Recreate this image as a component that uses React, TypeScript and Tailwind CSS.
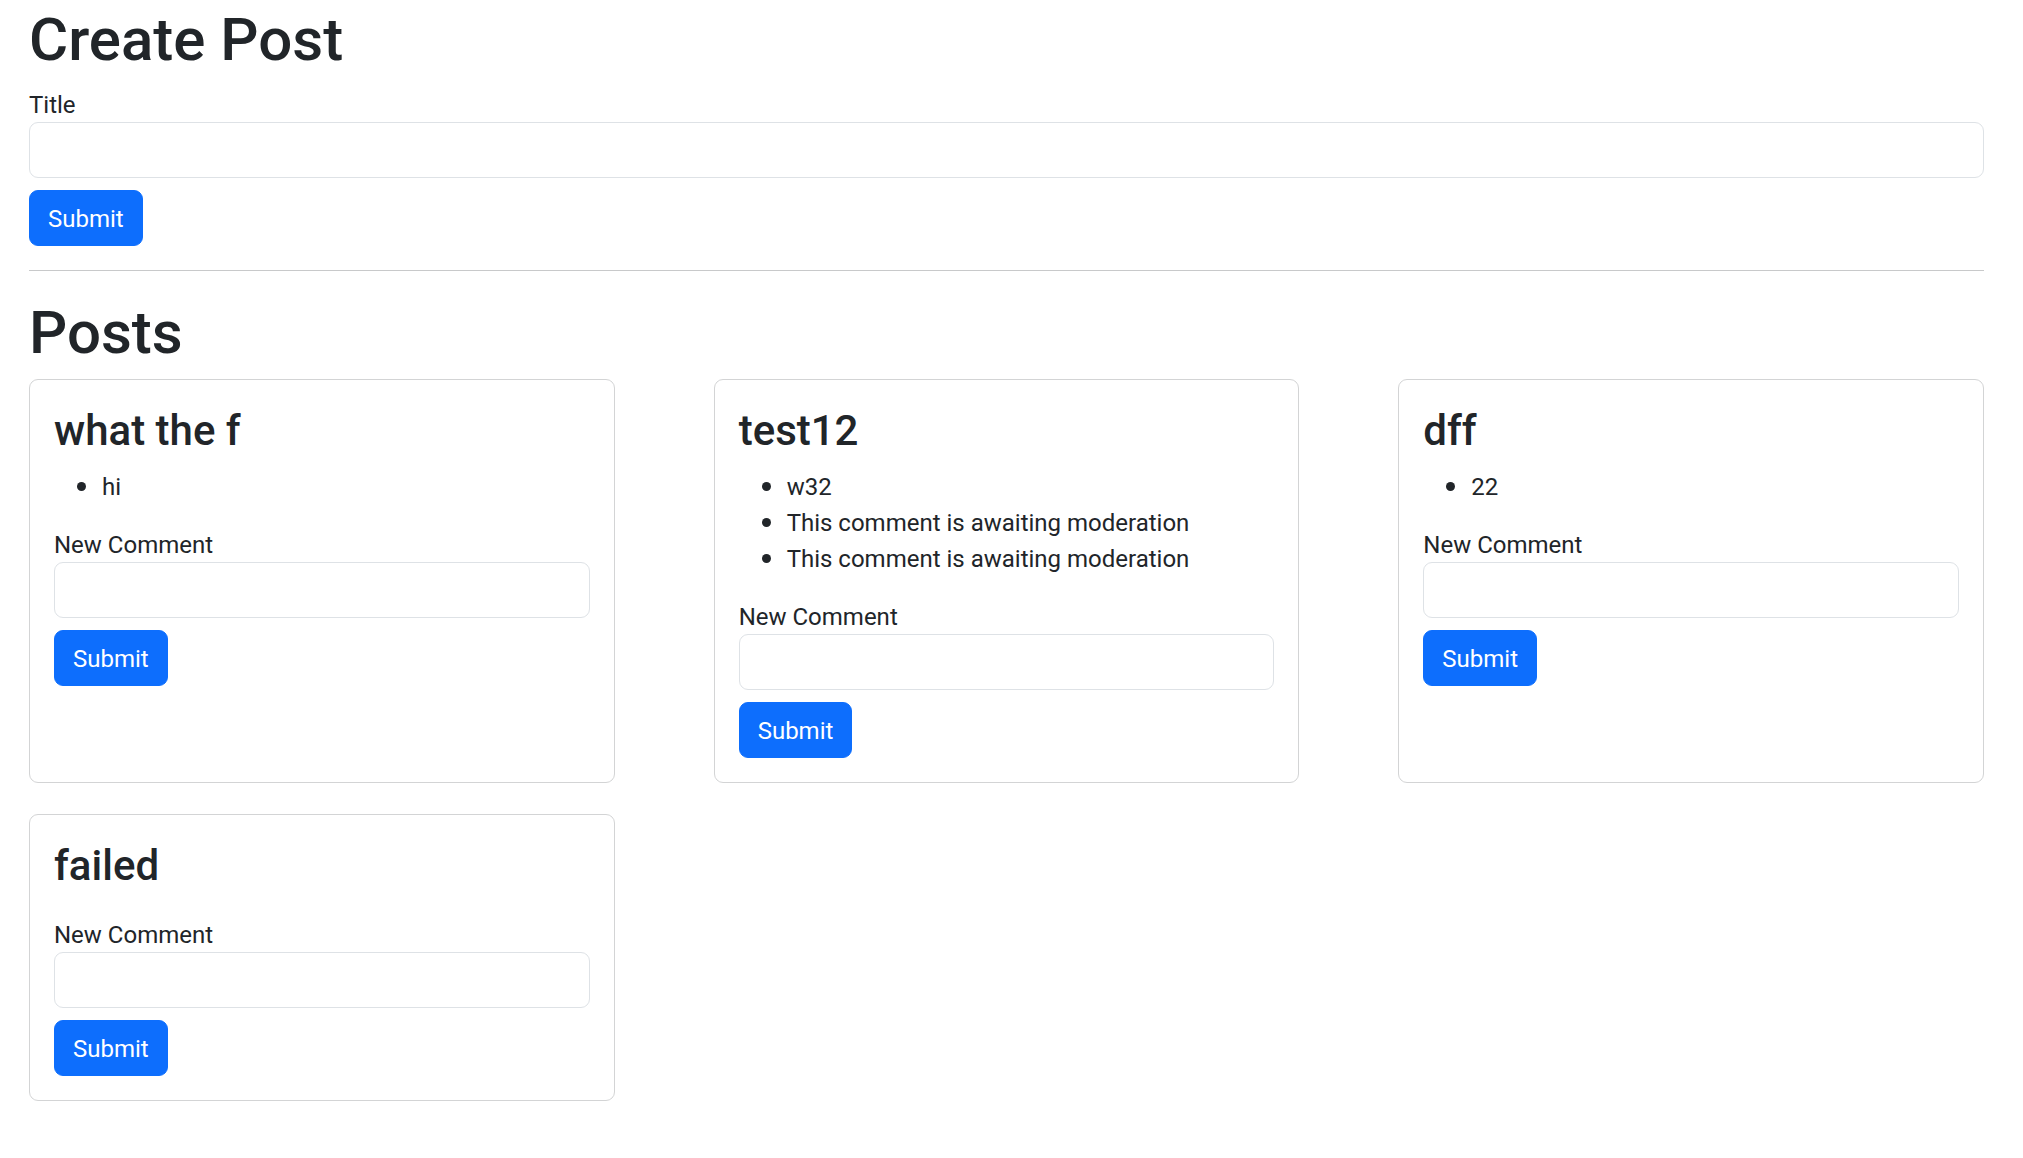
import React from "react";

type Post = { title: string; comments: string[] };

const posts: Post[] = [
  { title: "what the f", comments: ["hi"] },
  {
    title: "test12",
    comments: [
      "w32",
      "This comment is awaiting moderation",
      "This comment is awaiting moderation",
    ],
  },
  { title: "dff", comments: ["22"] },
  { title: "failed", comments: [] },
];

function SubmitButton() {
  return (
    <button
      type="button"
      className="mt-[12px] block h-[56px] rounded-[9px] border border-[#0d6efd] bg-[#0d6efd] px-[18px] pt-[2px] text-[24px] leading-[34px] text-white"
    >
      Submit
    </button>
  );
}

function TextInput() {
  return (
    <input
      type="text"
      className="block h-[56px] w-full rounded-[9px] border border-[#dee2e6] bg-white px-[18px] text-[24px] leading-[36px] text-[#212529] outline-none"
    />
  );
}

function PostCard({ post }: { post: Post }) {
  return (
    <div className="rounded-[9px] border border-[#d3d4d5] bg-white p-[24px]">
      {/* title line is 50.4px tall in the original */}
      <h3 className="mb-[12px] pt-[3px] text-[42px] font-medium leading-[47.4px]">
        {post.title}
      </h3>
      {post.comments.length > 0 ? (
        <ul className="mb-[24px] list-disc pl-[48px] marker:text-[30px]">
          {post.comments.map((c, i) => (
            <li key={i} className="h-[36px] pt-[2px] leading-[34px]">
              {c}
            </li>
          ))}
        </ul>
      ) : (
        <div className="h-[14px]" />
      )}
      <label className="block pt-[2px] leading-[34px]">New Comment</label>
      <TextInput />
      <SubmitButton />
    </div>
  );
}

export default function App() {
  return (
    <div
      className="min-h-screen bg-white pl-[29px] pr-[39px] pt-[2px] text-[24px] leading-[36px] text-[#212529]"
      style={{ fontFamily: "Roboto, 'Noto Sans', sans-serif" }}
    >
      <h1 className="mb-[12px] pt-[4px] text-[60px] font-medium leading-[68px]">
        Create Post
      </h1>
      <label className="block pt-[2px] leading-[34px]">Title</label>
      <TextInput />
      <SubmitButton />
      <hr className="my-[24px] border-t border-[#c8c9ca]" />
      <h1 className="mb-[12px] pt-[4px] text-[60px] font-medium leading-[68px]">
        Posts
      </h1>
      <div className="grid grid-cols-3 gap-x-[99px] gap-y-[31px]">
        {posts.map((p, i) => (
          <PostCard key={i} post={p} />
        ))}
      </div>
    </div>
  );
}
